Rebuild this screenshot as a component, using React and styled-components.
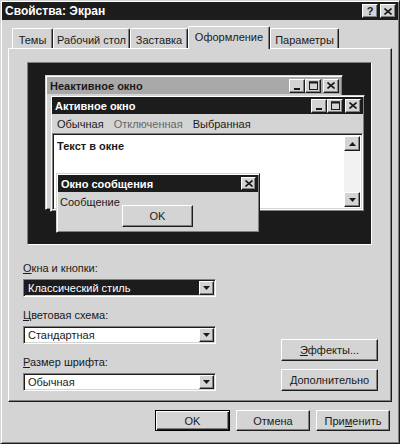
import React from 'react'
import styled, { createGlobalStyle, css } from 'styled-components'

const face = '#d4d4d4'
const light = '#ffffff'
const shadow = '#808080'
const dark = '#1c1c1c'
const ink = '#1a1a1a'

const GlobalStyle = createGlobalStyle`
    * { box-sizing: border-box; }
    html, body {
        margin: 0;
        padding: 0;
        background: ${face};
    }
    body {
        font-family: "Liberation Sans", Arial, sans-serif;
        font-size: 11px;
        color: ${ink};
    }
`

const raised = css`
    background: ${face};
    border: 1px solid;
    border-color: ${light} ${dark} ${dark} ${light};
    box-shadow: inset -1px -1px ${shadow};
`

const sunken = css`
    border: 1px solid;
    border-color: ${shadow} ${light} ${light} ${shadow};
    box-shadow: inset 1px 1px ${dark}, inset -1px -1px ${face};
`

const Dialog = styled.div`
    width: 400px;
    height: 444px;
    background: ${face};
    border: 1px solid;
    border-color: ${face} ${dark} ${dark} ${face};
    box-shadow: inset 1px 1px ${light}, inset -1px -1px ${shadow};
    padding: 1px;
    display: flex;
    flex-direction: column;
`

const TitleBar = styled.div`
    height: 18px;
    background: ${dark};
    color: #fff;
    display: flex;
    align-items: center;
    padding: 0 2px 0 3px;
    font-size: 12px;
    font-weight: bold;
`

const TitleText = styled.div`
    flex: 1;
`

const CaptionButtons = styled.div`
    display: flex;
    align-items: center;
`

const CaptionButton = styled.div`
    ${raised};
    width: ${p => p.$w || 16}px;
    height: ${p => p.$h || 14}px;
    margin-left: ${p => p.$gap || 0}px;
    display: grid;
    place-items: center;
    color: ${ink};
    font-size: 11px;
    font-weight: bold;
    line-height: 1;
`

const Sheet = styled.div`
    margin: 0 6px;
`

const TabStrip = styled.div`
    display: flex;
    align-items: flex-end;
    margin-top: 6px;
    padding-left: 4px;
`

const Tab = styled.div`
    position: relative;
    z-index: ${p => (p.$active ? 1 : 0)};
    width: ${p => p.$w}px;
    height: ${p => (p.$active ? 23 : 20)}px;
    margin-bottom: ${p => (p.$active ? -1 : 0)}px;
    background: ${face};
    border-top: 1px solid ${light};
    border-left: 1px solid ${light};
    border-right: 1px solid ${dark};
    box-shadow: inset -1px 0 ${shadow};
    border-radius: 2px 2px 0 0;
    padding-top: ${p => (p.$active ? 4 : 5)}px;
    text-align: center;
    white-space: nowrap;
`

const Panel = styled.div`
    height: 354px;
    background: ${face};
    border: 1px solid;
    border-color: ${light} ${dark} ${dark} ${light};
    box-shadow: inset -1px -1px ${shadow};
`

const Preview = styled.div`
    position: relative;
    margin: 13px 0 0 18px;
    width: 345px;
    height: 183px;
    background: #1b1b1b;
    border: 1px solid;
    border-color: ${shadow} ${light} ${light} ${shadow};
`

const MiniWindow = styled.div`
    position: absolute;
    left: ${p => p.$x}px;
    top: ${p => p.$y}px;
    width: ${p => p.$w}px;
    height: ${p => p.$h}px;
    background: ${face};
    border: 1px solid;
    border-color: ${face} ${dark} ${dark} ${face};
    box-shadow: inset 1px 1px ${light}, inset -1px -1px ${shadow};
    padding: 1px;
    display: flex;
    flex-direction: column;
`

const Caption = styled.div`
    flex: none;
    height: 17px;
    background: ${p => (p.$inactive ? '#a9a9a9' : dark)};
    color: ${p => (p.$inactive ? ink : '#fff')};
    display: flex;
    align-items: center;
    padding: 0 2px 0 3px;
    font-weight: bold;
    font-size: 11px;
`

const MenuBar = styled.div`
    flex: none;
    height: 19px;
    display: flex;
    align-items: center;
`

const MenuItem = styled.span`
    padding: 0 5px;
    color: ${p => (p.$disabled ? '#666' : ink)};
`

const ClientArea = styled.div`
    ${sunken};
    flex: 1;
    display: flex;
    background: #fff;
    padding: 1px;
`

const ClientText = styled.div`
    flex: 1;
    padding: 5px 3px;
    font-weight: bold;
    font-size: 11px;
`

const ScrollBar = styled.div`
    width: 16px;
    display: flex;
    flex-direction: column;
    margin: 1px 1px 1px 0;
    background: #f2f2f2;
`

const ScrollButton = styled.div`
    ${raised};
    height: 15px;
    display: grid;
    place-items: center;
`

const ScrollTrack = styled.div`
    flex: 1;
`

const MsgBody = styled.div`
    display: flex;
    flex-direction: column;
`

const MsgText = styled.div`
    line-height: 12px;
    margin: 4px 0 0 2px;
`

const Button = styled.div`
    ${raised};
    width: ${p => p.$w}px;
    height: ${p => p.$h || 21}px;
    display: grid;
    place-items: center;
    white-space: nowrap;
    ${p =>
        p.$default &&
        css`
            border: 1px solid #000;
            box-shadow: inset 1px 1px ${light}, inset -1px -1px ${dark},
                inset -2px -2px ${shadow};
        `}
`

const MsgButton = styled(Button)`
    margin: -3px 0 0 64px;
`

const Lower = styled.div`
    display: flex;
    justify-content: space-between;
    align-items: flex-end;
    margin-top: 17px;
    padding: 0 13px 0 14px;
`

const Fields = styled.div`
    display: flex;
    flex-direction: column;
    gap: 12px;
    width: 193px;
`

const Field = styled.div`
    display: flex;
    flex-direction: column;
    gap: 4px;
`

const Label = styled.div`
    height: 13px;
    line-height: 13px;
`

const Key = styled.span`
    text-decoration: underline;
`

const Combo = styled.div`
    ${sunken};
    height: 18px;
    background: #fff;
    display: flex;
    padding: 1px;
`

const ComboText = styled.div`
    flex: 1;
    padding-left: 3px;
    line-height: 14px;
    background: ${p => (p.$selected ? dark : '#fff')};
    color: ${p => (p.$selected ? '#fff' : ink)};
`

const ComboArrow = styled.div`
    ${raised};
    width: 15px;
    display: grid;
    place-items: center;
`

const SideButtons = styled.div`
    display: flex;
    flex-direction: column;
    gap: 8px;
`

const Footer = styled.div`
    display: flex;
    justify-content: flex-end;
    gap: 6px;
    margin-top: 8px;
    padding-right: 8px;
`

const Triangle = ({ up }) => (
    <svg width="7" height="4" viewBox="0 0 7 4">
        <path d={up ? 'M3.5 0 L7 4 L0 4 Z' : 'M0 0 L7 0 L3.5 4 Z'} fill={ink} />
    </svg>
)

const CloseGlyph = () => (
    <svg width="8" height="7" viewBox="0 0 8 7">
        <path d="M0.5 0.5 L7.5 6.5 M7.5 0.5 L0.5 6.5" stroke={ink} strokeWidth="1.6" />
    </svg>
)

const MinGlyph = () => (
    <svg width="8" height="8" viewBox="0 0 8 8">
        <rect x="1" y="6" width="6" height="2" fill={ink} />
    </svg>
)

const MaxGlyph = () => (
    <svg width="9" height="9" viewBox="0 0 9 9">
        <rect x="0.5" y="1" width="8" height="7.5" fill="none" stroke={ink} strokeWidth="1" />
        <rect x="0" y="0.5" width="9" height="2" fill={ink} />
    </svg>
)

const WindowControls = () => (
    <CaptionButtons>
        <CaptionButton><MinGlyph /></CaptionButton>
        <CaptionButton><MaxGlyph /></CaptionButton>
        <CaptionButton $gap={2}><CloseGlyph /></CaptionButton>
    </CaptionButtons>
)

const tabs = [
    { label: 'Темы', w: 41 },
    { label: 'Рабочий стол', w: 77 },
    { label: 'Заставка', w: 58 },
    { label: 'Оформление', w: 82, active: true },
    { label: 'Параметры', w: 69 },
]

const fields = [
    { key: 'О', rest: 'кна и кнопки:', value: 'Классический стиль', selected: true },
    { key: 'Ц', rest: 'ветовая схема:', value: 'Стандартная' },
    { key: 'Р', rest: 'азмер шрифта:', value: 'Обычная' },
]

const App = () => {
    return (
        <>
            <GlobalStyle />
            <Dialog>
                <TitleBar>
                    <TitleText>Свойства: Экран</TitleText>
                    <CaptionButtons>
                        <CaptionButton>?</CaptionButton>
                        <CaptionButton $gap={2}><CloseGlyph /></CaptionButton>
                    </CaptionButtons>
                </TitleBar>

                <Sheet>
                    <TabStrip>
                        {tabs.map(t => (
                            <Tab key={t.label} $w={t.w} $active={t.active}>
                                {t.label}
                            </Tab>
                        ))}
                    </TabStrip>

                    <Panel>
                        <Preview>
                            <MiniWindow $x={17} $y={12} $w={298} $h={135}>
                                <Caption $inactive>
                                    <TitleText>Неактивное окно</TitleText>
                                    <WindowControls />
                                </Caption>
                            </MiniWindow>

                            <MiniWindow $x={22} $y={32} $w={315} $h={117}>
                                <Caption>
                                    <TitleText>Активное окно</TitleText>
                                    <WindowControls />
                                </Caption>
                                <MenuBar>
                                    <MenuItem>Обычная</MenuItem>
                                    <MenuItem $disabled>Отключенная</MenuItem>
                                    <MenuItem>Выбранная</MenuItem>
                                </MenuBar>
                                <ClientArea>
                                    <ClientText>Текст в окне</ClientText>
                                    <ScrollBar>
                                        <ScrollButton><Triangle up /></ScrollButton>
                                        <ScrollTrack />
                                        <ScrollButton><Triangle /></ScrollButton>
                                    </ScrollBar>
                                </ClientArea>
                            </MiniWindow>

                            <MiniWindow $x={28} $y={110} $w={204} $h={60}>
                                <Caption>
                                    <TitleText>Окно сообщения</TitleText>
                                    <CaptionButton $w={15} $h={13}><CloseGlyph /></CaptionButton>
                                </Caption>
                                <MsgBody>
                                    <MsgText>Сообщение</MsgText>
                                    <MsgButton $w={71} $h={22}>OK</MsgButton>
                                </MsgBody>
                            </MiniWindow>
                        </Preview>

                        <Lower>
                            <Fields>
                                {fields.map(f => (
                                    <Field key={f.key}>
                                        <Label><Key>{f.key}</Key>{f.rest}</Label>
                                        <Combo>
                                            <ComboText $selected={f.selected}>{f.value}</ComboText>
                                            <ComboArrow><Triangle /></ComboArrow>
                                        </Combo>
                                    </Field>
                                ))}
                            </Fields>
                            <SideButtons>
                                <Button $w={97} $h={22}><span><Key>Э</Key>ффекты...</span></Button>
                                <Button $w={97} $h={22}><span><Key>Д</Key>ополнительно</span></Button>
                            </SideButtons>
                        </Lower>
                    </Panel>
                </Sheet>

                <Footer>
                    <Button $w={75} $default>OK</Button>
                    <Button $w={74}>Отмена</Button>
                    <Button $w={74}><span>При<Key>м</Key>енить</span></Button>
                </Footer>
            </Dialog>
        </>
    )
}

export default App
